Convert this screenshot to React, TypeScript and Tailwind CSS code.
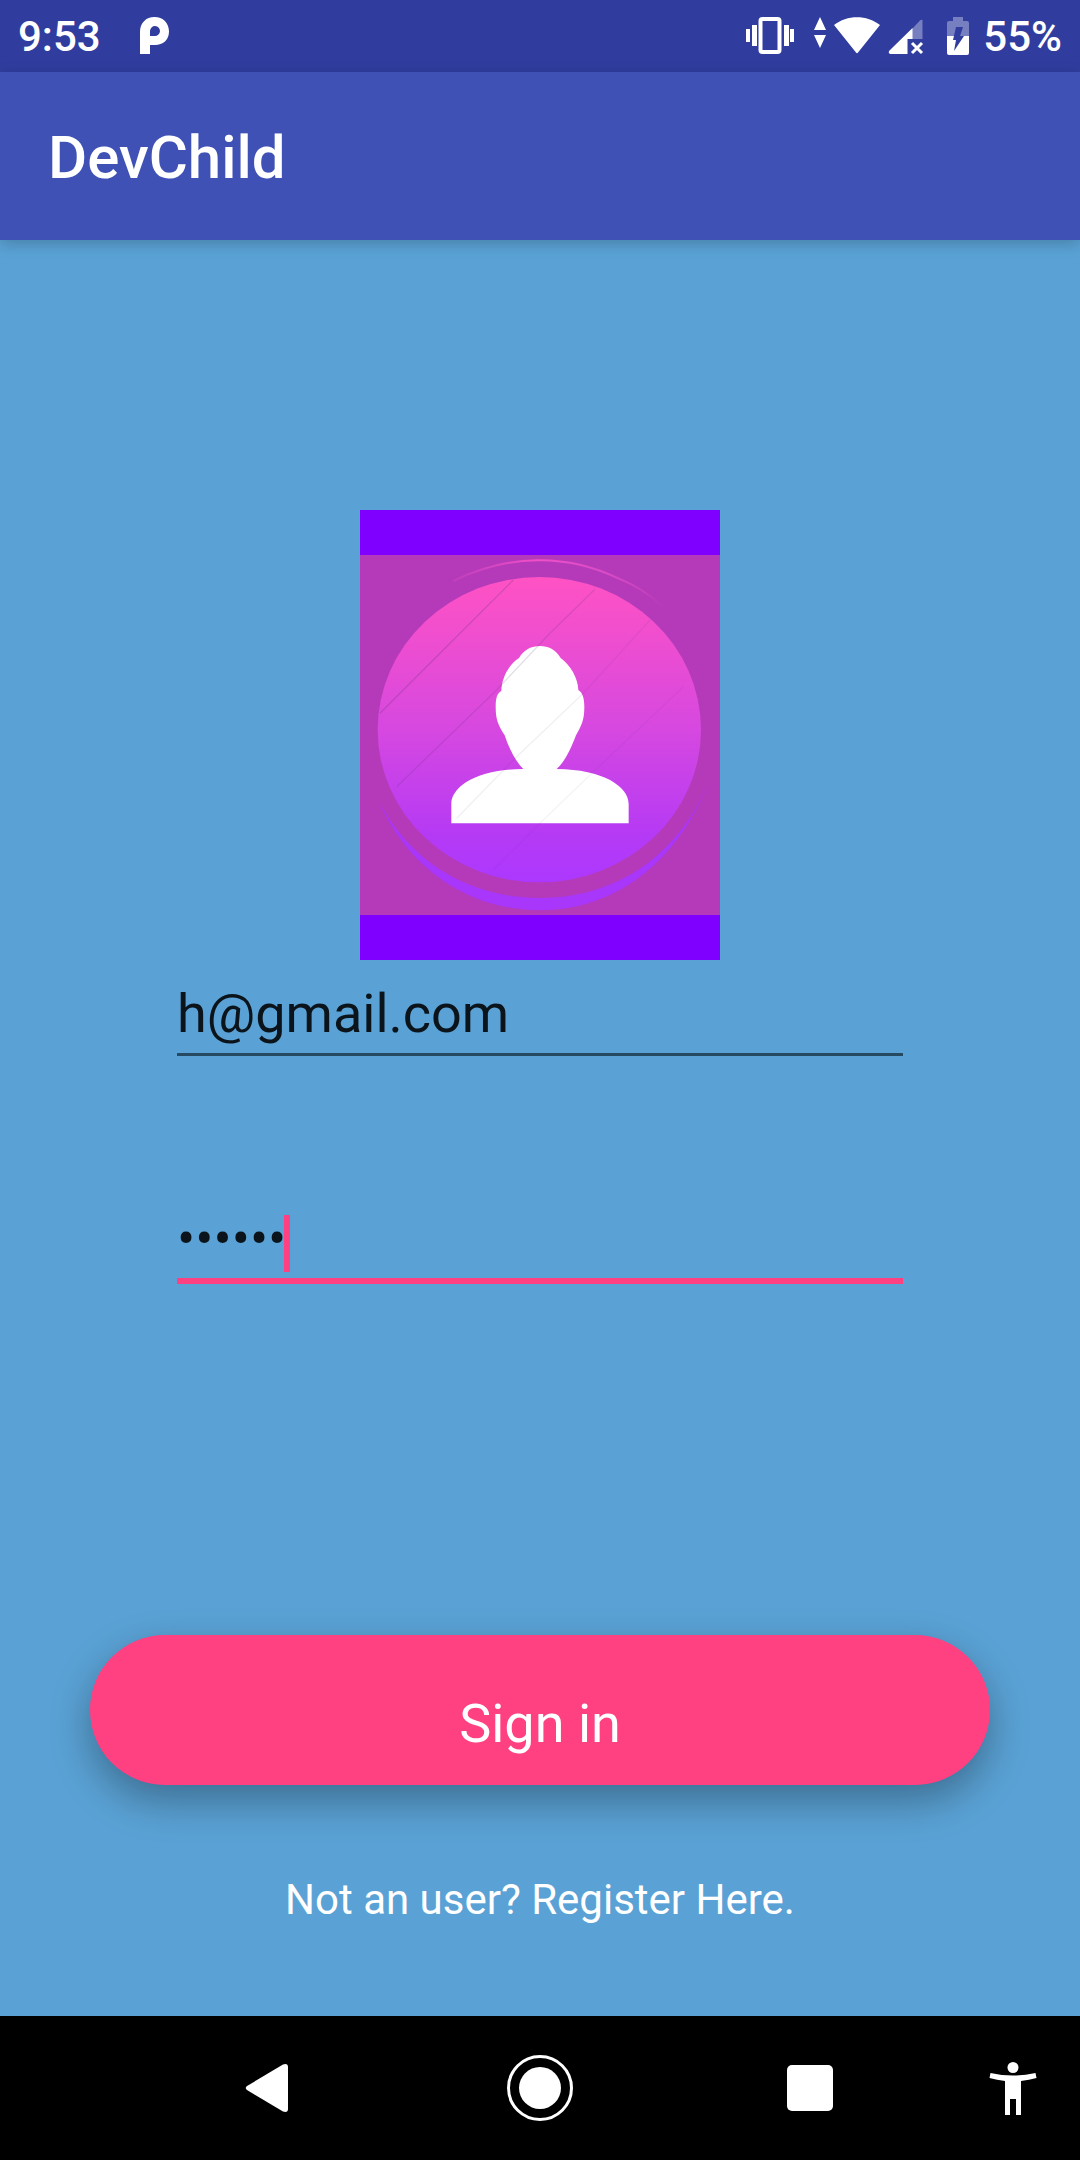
import React from 'react';

function StatusBar() {
  return (
    <div className="flex h-[72px] items-center justify-between bg-[#303d9e] px-[18px] pt-[2px] text-[42px] leading-[48px] font-medium text-white">
      <div className="flex items-center gap-[38px]">
        <span>9:53</span>
        <svg className="h-[40px] w-[32px]" viewBox="0 0 32 40" fill="none" aria-hidden="true">
          <path
            fill="#fff"
            fillRule="evenodd"
            d="M1 37V15C1 6 7 0 15.500 0S30 6 30 14.500 24 28 16 28H11V37ZM11 19H15.500A5 5 0 1 0 11 14Z"
          />
        </svg>
      </div>
      <div className="flex items-center">
        <svg className="mr-[18px] h-[40px] w-[50px]" viewBox="0 0 50 40" fill="none" aria-hidden="true">
          <path
            fill="#fff"
            d="M1 12h4v13H1zM7 8h5v21H7zM39 8h5v21h-5zM45 12h4v13h-4z"
          />
          <rect x="15.500" y="2" width="19" height="33" rx="2" stroke="#fff" strokeWidth="4" />
        </svg>
        <svg className="mr-[7px] h-[40px] w-[14px]" viewBox="0 0 14 40" fill="#fff" aria-hidden="true">
          <path d="M7 0l6 13H1zM1 18h12L7 31z" />
        </svg>
        <svg className="mr-[8px] h-[40px] w-[46px]" viewBox="0 0 46 40" fill="#fff" aria-hidden="true">
          <path d="M0 8C13-2.500 33-2.500 46 8L24 35.500q-1 1.500-2 0z" />
        </svg>
        <svg className="mr-[23px] h-[40px] w-[36px]" viewBox="0 0 36 40" fill="none" aria-hidden="true">
          <path fill="#767fbf" d="M34.500 3V22H24V12L32 3.500q1-1 2.500-.5z" />
          <path fill="#fff" d="M24.500 11V22h-5v15H2q-2-1-1-3z" />
          <path stroke="#fff" strokeWidth="3" d="M24 26l10 10M34 26l-10 10" />
        </svg>
        <svg className="mr-[14px] h-[40px] w-[22px]" viewBox="0 0 22 40" fill="none" aria-hidden="true">
          <path fill="#767fbf" d="M0 19V6q0-2 2-2h4V0h10v4h4q2 0 2 2v13z" />
          <path fill="#fff" d="M0 19h22v17q0 2-2 2H2q-2 0-2-2z" />
          <path fill="#303d9e" d="M9 10h7l-3 9h4L7 34l2-11H6z" />
        </svg>
        <span>55%</span>
      </div>
    </div>
  );
}

function Avatar() {
  return (
    <svg
      className="h-[450px] w-[360px]"
      viewBox="30 30 1080 1350"
      role="img"
      aria-label="User avatar"
    >
      <defs>
        <linearGradient id="disc" x1="0" y1="0" x2="0" y2="1">
          <stop offset="0" stopColor="#ff52c4" />
          <stop offset="0.5" stopColor="#d648e0" />
          <stop offset="0.85" stopColor="#b53af5" />
          <stop offset="1" stopColor="#ac38ff" />
        </linearGradient>
        <linearGradient id="topArc" x1="0" y1="0" x2="1" y2="0">
          <stop offset="0" stopColor="#f050c8" stopOpacity="0.2" />
          <stop offset="0.4" stopColor="#f050c8" />
          <stop offset="0.75" stopColor="#e050c8" stopOpacity="0.8" />
          <stop offset="1" stopColor="#f050c8" stopOpacity="0" />
        </linearGradient>
        <clipPath id="discClip">
          <ellipse cx="568" cy="689" rx="485" ry="458" />
        </clipPath>
      </defs>
      <rect x="30" y="30" width="1080" height="1350" fill="#7f00ff" />
      <rect x="30" y="165" width="1080" height="1080" fill="#b53ab9" />
      <path
        d="M310 243C475 162 650 160 805 235Q880 265 940 320"
        fill="none"
        stroke="url(#topArc)"
        strokeWidth="6"
      />
      <path
        d="M85 900C175 1110 360 1231 572 1231S975 1100 1075 850C975 1085 780 1194 572 1194S180 1090 85 900Z"
        fill="#a936fb"
      />
      <ellipse cx="568" cy="689" rx="485" ry="458" fill="url(#disc)" />
      <path
        d="M304 970V912C304 860 380 808 520 807C495 782 477 745 464 706C445 675 437 660 437 620C437 595 441 580 454 573C455 535 475 495 507 474C522 448 545 438 570 438S617 448 632 474C662 496 684 535 685 570C698 578 703 595 703 620C703 660 695 675 678 706C663 745 645 785 620 807C760 808 836 860 836 912V970Z"
        fill="#fff"
      />
      <g clipPath="url(#discClip)" fill="none" stroke="#503070" strokeWidth="4">
        <path d="M490 240L300 430 90 640" strokeOpacity="0.22" />
        <path d="M735 268L600 400 430 580 140 860" strokeOpacity="0.16" />
        <path d="M900 360L700 580 500 770 320 955" strokeOpacity="0.08" />
        <path d="M1000 560L720 825 570 970 430 1110" strokeOpacity="0.06" />
      </g>
    </svg>
  );
}

function NavBar() {
  const button = 'flex h-full items-center justify-center';
  return (
    <nav className="grid h-[144px] grid-cols-[1fr_2fr_2fr_2fr_1fr] bg-black" aria-label="System">
      <span />
      <button className={button} aria-label="Back">
        <svg className="h-[60px] w-[60px]" viewBox="0 0 60 60" aria-hidden="true">
          <path fill="#fff" d="M7 28L43 6.500Q48 5 48 9V51Q48 55 43 53.500L7 32Q4.500 30 7 28z" />
        </svg>
      </button>
      <button className={button} aria-label="Home">
        <svg className="h-[66px] w-[66px]" viewBox="0 0 66 66" aria-hidden="true">
          <circle cx="33" cy="33" r="31.500" fill="none" stroke="#fff" strokeWidth="3" />
          <circle cx="33" cy="33" r="21" fill="#fff" />
        </svg>
      </button>
      <button className={button} aria-label="Recent apps">
        <span className="h-[46px] w-[46px] rounded-[5px] bg-white" />
      </button>
      <button className={button} aria-label="Accessibility">
        <svg className="h-[54px] w-[48px]" viewBox="0 0 48 54" fill="#fff" aria-hidden="true">
          <circle cx="24" cy="6.500" r="5.500" />
          <path d="M1.500 12Q24 17 46.500 12L47.500 17Q40 19 32 20V54H27V38H21V54H16V20Q8 19 .5 17z" />
        </svg>
      </button>
    </nav>
  );
}

export default function App() {
  return (
    <div className="flex min-h-screen flex-col bg-[#5aa2d5] font-['Roboto',sans-serif]">
      <StatusBar />
      <header className="flex h-[168px] items-center bg-[#3f51b5] px-[48px] pt-[4px] shadow-[0_4px_14px_rgba(0,0,0,0.2)]">
        <h1 className="text-[60px] leading-[72px] font-medium text-white">DevChild</h1>
      </header>
      <main className="flex flex-1 flex-col items-center px-[90px] pt-[270px]">
        <Avatar />
        <form className="flex w-full flex-col" onSubmit={(e) => e.preventDefault()}>
          <div className="mx-[87px] flex flex-col">
            <input
              type="email"
              aria-label="Email"
              defaultValue="h@gmail.com"
              className="h-[96px] w-full border-b-3 border-[#274a63] pt-[21px] pb-[8px] text-[54px] leading-[64px] text-[#0b141b] outline-none"
            />
            <div className="relative mt-[129px]">
              <input
                type="password"
                aria-label="Password"
                defaultValue="secret"
                className="h-[99px] w-full border-b-6 border-[#ff4081] pt-[21px] pb-[8px] text-[54px] leading-[64px] text-[#0b141b] outline-none"
              />
              <span className="absolute bottom-[12px] left-[107px] h-[57px] w-[6px] bg-[#ff4081]" />
            </div>
          </div>
          <button
            type="submit"
            className="mt-[351px] h-[150px] w-full rounded-full bg-[#ff4081] pt-[28px] text-[54px] leading-[64px] text-white shadow-[0_16px_40px_rgba(0,0,0,0.32)]"
          >
            Sign in
          </button>
        </form>
        <a href="#register" className="mt-[91px] text-[42px] leading-[48px] text-white">
          Not an user? Register Here.
        </a>
      </main>
      <NavBar />
    </div>
  );
}
